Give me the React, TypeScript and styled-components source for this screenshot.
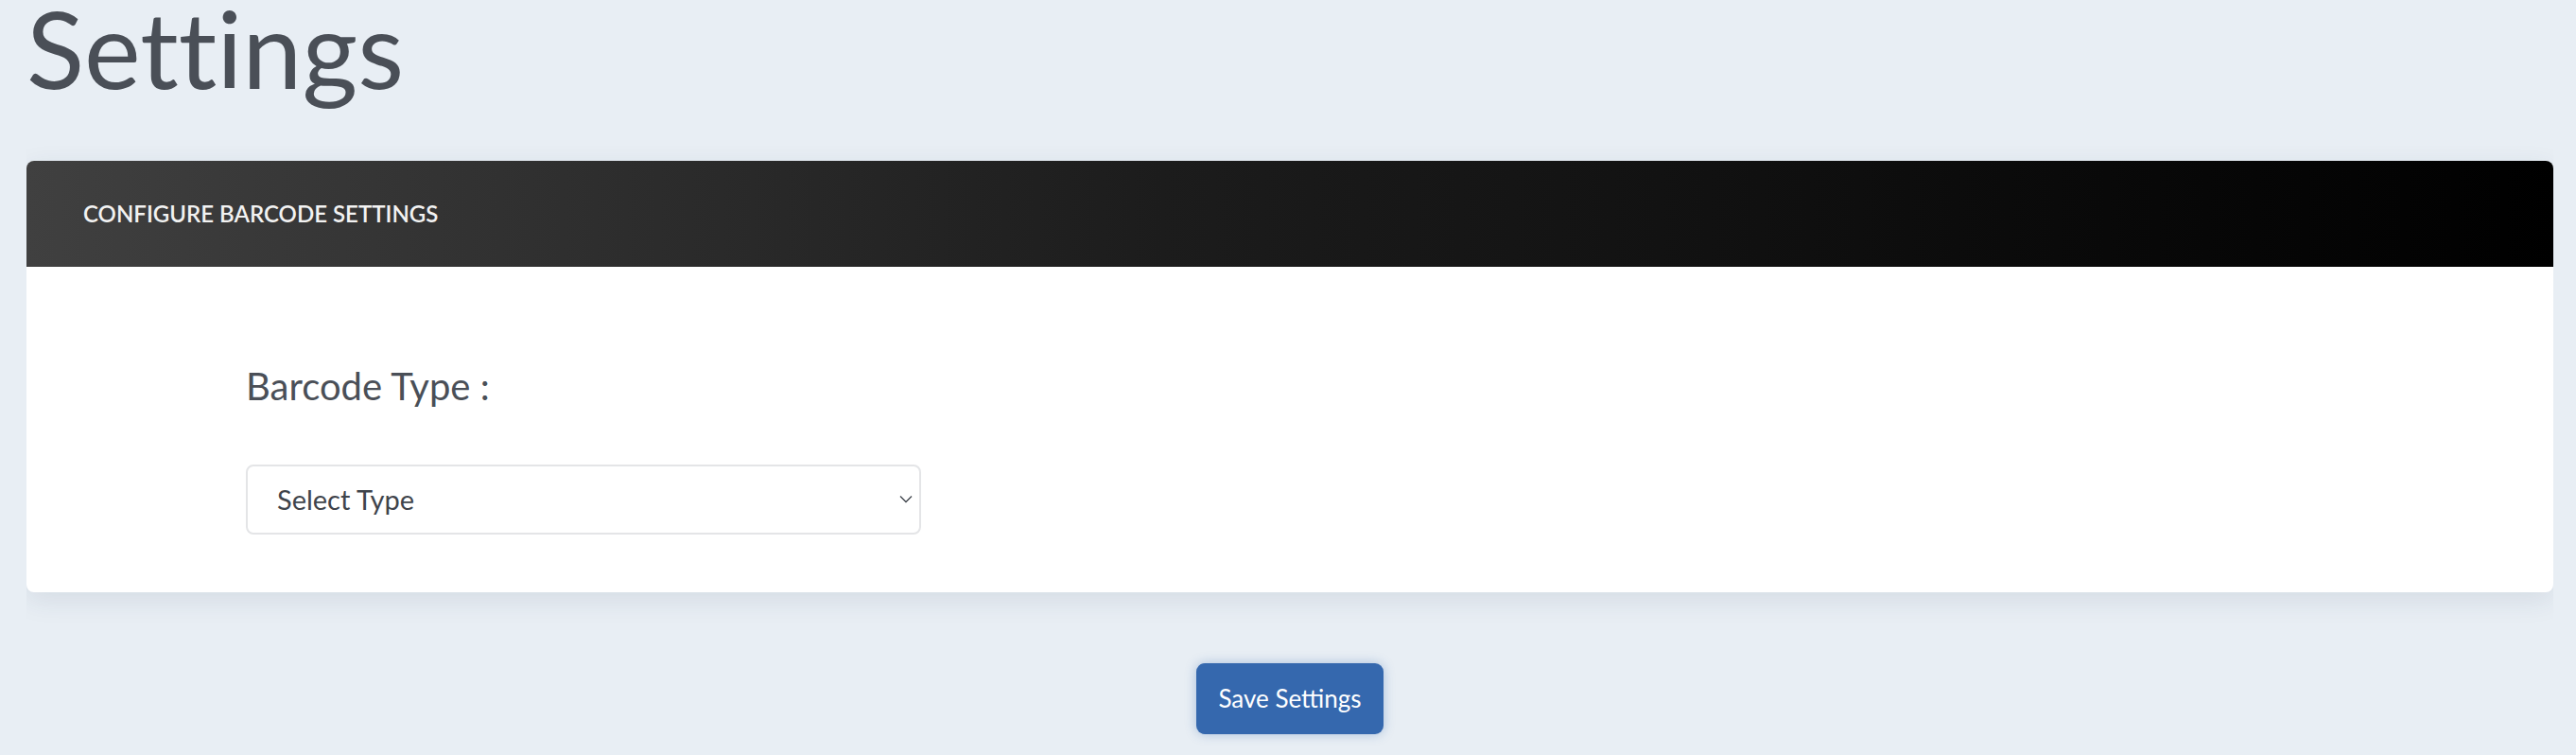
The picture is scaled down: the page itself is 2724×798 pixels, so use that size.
import React from "react";
import styled, { createGlobalStyle } from "styled-components";

const GlobalStyle = createGlobalStyle`
  html, body {
    margin: 0;
    padding: 0;
    background: #e8eef4;
    font-family: Lato, "Open Sans", "Liberation Sans", sans-serif;
    font-variant-ligatures: none;
  }
  * { box-sizing: border-box; }
`;

const Page = styled.main`
  margin: 0 24px 0 28px;
  overflow: hidden;
  height: 798px;
  background: #e8eef4;
`;

const Title = styled.h1`
  margin: 0 0 68px;
  font-size: 113px;
  line-height: 0.9;
  font-weight: 400;
  color: #4a4f57;
  font-variant-ligatures: none;
`;

const Card = styled.section`
  background: #ffffff;
  border-radius: 8px;
  box-shadow: 0 8px 28px rgba(40, 60, 90, 0.1);
  overflow: hidden;
`;

const CardHeader = styled.header`
  height: 112px;
  display: flex;
  align-items: center;
  padding-left: 60px;
  background: linear-gradient(to right, #404040 0%, #1c1c1c 45%, #000000 100%);
`;

const HeaderTitle = styled.h2`
  margin: 0;
  font-size: 24px;
  font-weight: 600;
  color: #f2f2f2;
`;

const CardBody = styled.div`
  padding: 102px 0 61px 232px;
  display: flex;
  flex-direction: column;
  align-items: flex-start;
`;

const FieldLabel = styled.label`
  font-size: 40px;
  line-height: 1.2;
  color: #4a4f57;
  margin-bottom: 59px;
`;

const SelectWrap = styled.div`
  position: relative;
  width: 714px;
  height: 74px;
`;

const Select = styled.select`
  appearance: none;
  -webkit-appearance: none;
  width: 100%;
  height: 100%;
  padding: 0 40px 0 31px;
  border: 2px solid #e4e5e7;
  border-radius: 8px;
  background: #ffffff;
  font-family: Lato, "Open Sans", "Liberation Sans", sans-serif;
  font-size: 29px;
  color: #3f444b;
  outline: none;
`;

const Chevron = styled.svg`
  position: absolute;
  right: 9px;
  top: 32px;
  width: 14px;
  height: 9px;
  pointer-events: none;
`;

const Actions = styled.div`
  display: flex;
  justify-content: center;
  padding-top: 75px;
`;

const SaveButton = styled.button`
  width: 198px;
  height: 75px;
  border: none;
  border-radius: 9px;
  background: #3568ae;
  color: #ffffff;
  font-family: Lato, "Open Sans", "Liberation Sans", sans-serif;
  font-size: 26px;
  box-shadow: 0 0 12px rgba(53, 104, 174, 0.35);
  cursor: pointer;
`;

export default function App() {
  return (
    <>
      <GlobalStyle />
      <Page>
        <Title>Settings</Title>
        <Card>
          <CardHeader>
            <HeaderTitle>CONFIGURE BARCODE SETTINGS</HeaderTitle>
          </CardHeader>
          <CardBody>
            <FieldLabel htmlFor="barcode-type">Barcode Type :</FieldLabel>
            <SelectWrap>
              <Select id="barcode-type" defaultValue="">
                <option value="">Select Type</option>
                <option value="code128">CODE128</option>
                <option value="ean13">EAN13</option>
                <option value="upc">UPC</option>
              </Select>
              <Chevron viewBox="0 0 14 9">
                <polyline points="1,1.5 7,7.5 13,1.5" fill="none" stroke="#3f444b" strokeWidth="1.3" />
              </Chevron>
            </SelectWrap>
          </CardBody>
        </Card>
        <Actions>
          <SaveButton>Save Settings</SaveButton>
        </Actions>
      </Page>
    </>
  );
}
